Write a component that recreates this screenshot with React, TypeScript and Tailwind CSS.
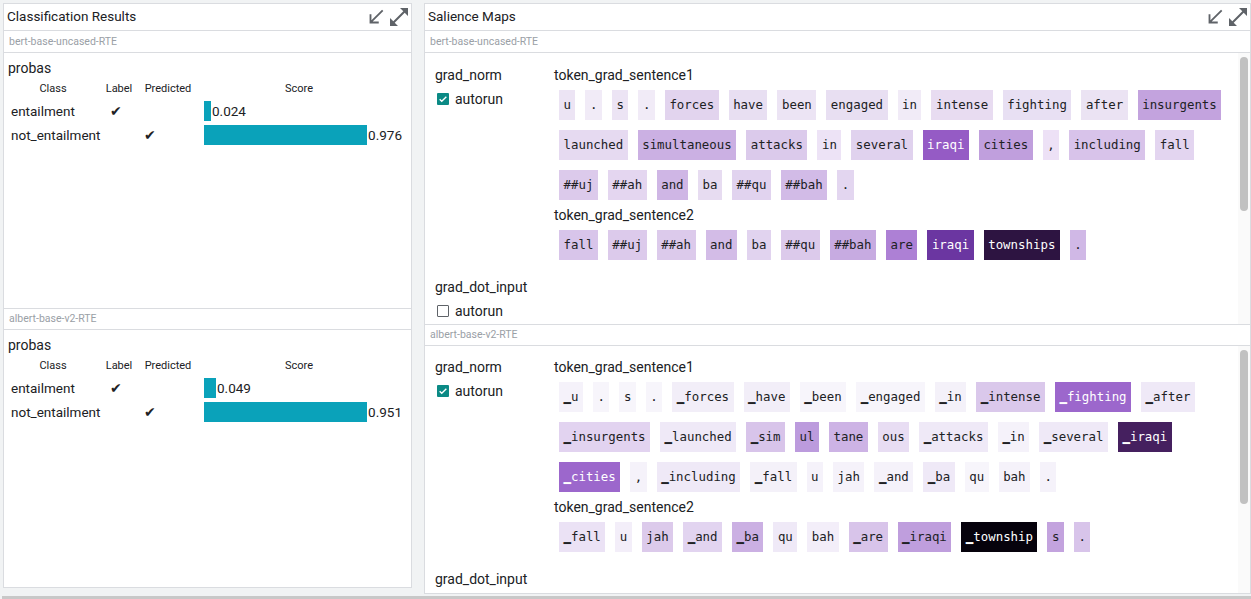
import React from 'react';

type Tok = [string, string, boolean?];

const BERT_S1: Tok[] = [
  ['u', '#ece4f4'], ['.', '#f1ebf7'], ['s', '#ece4f4'], ['.', '#f1ebf7'], ['forces', '#e2d4ee'],
  ['have', '#e8dff2'], ['been', '#ece4f4'], ['engaged', '#e8dff2'], ['in', '#f1ebf7'], ['intense', '#e8dcf1'],
  ['fighting', '#e8e0f3'], ['after', '#ebe3f3'], ['insurgents', '#c3a3de'],
  ['launched', '#e6daf1'], ['simultaneous', '#cbb0e3'], ['attacks', '#dbcaeb'], ['in', '#ede3f6'],
  ['several', '#e0d2ee'], ['iraqi', '#955bc5', true], ['cities', '#c09fdd'], [',', '#ede1f6'],
  ['including', '#d8c3ea'], ['fall', '#e3d5f0'],
  ['##uj', '#dccaeb'], ['##ah', '#e4d6f0'], ['and', '#cfb6e5'], ['ba', '#e7dcf1'], ['##qu', '#e1d3ef'],
  ['##bah', '#d2bbe7'], ['.', '#e3d6f0'],
];

const BERT_S2: Tok[] = [
  ['fall', '#d8c5ea'], ['##uj', '#dccaeb'], ['##ah', '#dccaeb'], ['and', '#d3bce7'], ['ba', '#e1d3ef'],
  ['##qu', '#dccaeb'], ['##bah', '#c7abe1'], ['are', '#ad80d5'], ['iraqi', '#6b36a1', true],
  ['townships', '#2d1441', true], ['.', '#d0b8e6'],
];

const ALBERT_S1: Tok[] = [
  ['▁u', '#f5f2fa'], ['.', '#f7f5fb'], ['s', '#f7f5fb'], ['.', '#f7f5fb'], ['▁forces', '#f2eef8'],
  ['▁have', '#f2eef8'], ['▁been', '#f7f5fb'], ['▁engaged', '#f7f5fb'], ['▁in', '#f4f1f9'],
  ['▁intense', '#dac8eb'], ['▁fighting', '#9c67cc', true], ['▁after', '#efe9f7'],
  ['▁insurgents', '#e2d3f0'], ['▁launched', '#efe9f7'], ['▁sim', '#d8c4ea'], ['ul', '#bc9bdd'],
  ['tane', '#cdb3e5'], ['ous', '#e8ddf3'], ['▁attacks', '#efe9f7'], ['▁in', '#f5f2fa'],
  ['▁several', '#efe9f7'], ['▁iraqi', '#45205f', true],
  ['▁cities', '#9c67cc', true], [',', '#f5f2fa'], ['▁including', '#efe9f7'], ['▁fall', '#f4f1f9'],
  ['u', '#f5f2fa'], ['jah', '#f5f2fa'], ['▁and', '#f5f2fa'], ['▁ba', '#efe9f7'], ['qu', '#f7f5fb'],
  ['bah', '#f5f2fa'], ['.', '#f5f2fa'],
];

const ALBERT_S2: Tok[] = [
  ['▁fall', '#ebe2f5'], ['u', '#f3eef9'], ['jah', '#dccaeb'], ['▁and', '#e2d4f0'], ['▁ba', '#cbb0e3'],
  ['qu', '#efe9f7'], ['bah', '#f3eef9'], ['▁are', '#d8c4ea'], ['▁iraqi', '#bf9edd'],
  ['▁township', '#06020c', true], ['s', '#c3a3de'], ['.', '#d8c4ea'],
];

const CLASSIFICATION = [
  {
    model: 'bert-base-uncased-RTE',
    rows: [
      { cls: 'entailment', label: true, pred: false, score: '0.024', bar: 7 },
      { cls: 'not_entailment', label: false, pred: true, score: '0.976', bar: 165 },
    ],
  },
  {
    model: 'albert-base-v2-RTE',
    rows: [
      { cls: 'entailment', label: true, pred: false, score: '0.049', bar: 12 },
      { cls: 'not_entailment', label: false, pred: true, score: '0.951', bar: 167 },
    ],
  },
];

const SouthWestIcon = () => (
  <svg width="22" height="22" viewBox="0 0 24 24" fill="#5f6368">
    <path d="M20 5.41L18.59 4 7 15.59V9H5v10h10v-2H8.41z" />
  </svg>
);

const ExpandIcon = () => (
  <svg width="24" height="24" viewBox="0 0 24 24" fill="#5f6368">
    <path d="M21 11V3h-8l3.29 3.29-10 10L3 13v8h8l-3.29-3.29 10-10z" />
  </svg>
);

const PanelHeader = ({ title }: { title: string }) => (
  <div className="h-[27px] flex items-center justify-between pl-[3px] border-b border-[#dadce0] shrink-0">
    <span className="text-[13.5px] text-[#202124] -mt-[1px]">{title}</span>
    <div className="flex items-center">
      <SouthWestIcon />
      <ExpandIcon />
    </div>
  </div>
);

const ModelBar = ({ name, top }: { name: string; top?: boolean }) => (
  <div
    className={`h-[22px] flex items-center px-[5px] text-[10.5px] text-[#9aa0a6] border-b border-[#dadce0] shrink-0 ${
      top ? 'border-t' : ''
    }`}
  >
    {name}
  </div>
);

const Checkbox = ({ checked }: { checked: boolean }) =>
  checked ? (
    <div className="w-[12px] h-[12px] bg-[#0b8a85] rounded-[1px] flex items-center justify-center">
      <svg width="10" height="10" viewBox="0 0 24 24" fill="none" stroke="white" strokeWidth="3.2">
        <path d="M4 12.5l5 5L20 6.5" />
      </svg>
    </div>
  ) : (
    <div className="w-[12px] h-[12px] border border-[#5f6368] rounded-[1px] bg-white" />
  );

const Autorun = ({ checked }: { checked: boolean }) => (
  <div className="mt-[4px] h-[20px] flex items-center gap-[6px] pl-[2px]">
    <Checkbox checked={checked} />
    <span className="text-[14px] text-[#202124]">autorun</span>
  </div>
);

const Token = ({ t }: { t: Tok }) => (
  <span
    className={`m-[5px] h-[30px] px-[4.5px] leading-[30px] text-[12.4px] font-['DejaVu_Sans_Mono',monospace] whitespace-pre ${
      t[2] ? 'text-white' : 'text-[#202124]'
    }`}
    style={{ backgroundColor: t[1] }}
  >
    {t[0]}
  </span>
);

const TokenGroup = ({ label, tokens }: { label: string; tokens: Tok[] }) => (
  <div>
    <div className="h-[20px] leading-[20px] text-[14px] text-[#202124]">{label}</div>
    <div className="flex flex-wrap">
      {tokens.map((t, i) => (
        <Token key={i} t={t} />
      ))}
    </div>
  </div>
);

const Scrollbar = ({ top, height }: { top: number; height: number }) => (
  <div className="w-[12px] shrink-0 bg-[#fafafa] flex justify-center">
    <div className="w-[8px] rounded-full bg-[#c1c1c1]" style={{ marginTop: top, height }} />
  </div>
);

const SalienceSection = ({
  s1,
  s2,
  pt,
  thumbTop,
  showSecondAutorun,
}: {
  s1: Tok[];
  s2: Tok[];
  pt: string;
  thumbTop: number;
  showSecondAutorun: boolean;
}) => (
  <div className="flex-1 flex min-h-0">
    <div className={`flex-1 overflow-hidden pl-[10px] ${pt}`}>
      <div className="flex">
        <div className="w-[119px] shrink-0">
          <div className="h-[20px] leading-[20px] text-[14px] text-[#202124]">grad_norm</div>
          <Autorun checked />
        </div>
        <div className="w-[684px]">
          <TokenGroup label="token_grad_sentence1" tokens={s1} />
          <TokenGroup label="token_grad_sentence2" tokens={s2} />
        </div>
      </div>
      <div className="mt-[12px]">
        <div className="h-[20px] leading-[20px] text-[14px] text-[#202124]">grad_dot_input</div>
        {showSecondAutorun && <Autorun checked={false} />}
      </div>
    </div>
    <Scrollbar top={thumbTop} height={154} />
  </div>
);

const ClassificationTable = ({ rows }: { rows: (typeof CLASSIFICATION)[0]['rows'] }) => (
  <div className="pt-[5px] pl-[4px]">
    <div className="h-[20px] leading-[20px] text-[14px] text-[#202124]">probas</div>
    <div className="mt-[1px] grid grid-cols-[90px_42px_56px_206px] text-[#202124]">
      <div className="h-[20px] leading-[20px] text-[11px] text-center">Class</div>
      <div className="h-[20px] leading-[20px] text-[11px] text-center">Label</div>
      <div className="h-[20px] leading-[20px] text-[11px] text-center">Predicted</div>
      <div className="h-[20px] leading-[20px] text-[11px] text-center">Score</div>
      {rows.map((r) => (
        <React.Fragment key={r.cls}>
          <div className="h-[24px] flex items-center pl-[3px] text-[13.5px]">{r.cls}</div>
          <div className="h-[24px] flex items-center pl-[12px] text-[14px] font-['DejaVu_Sans',sans-serif]">
            {r.label ? '✔' : ''}
          </div>
          <div className="h-[24px] flex items-center pl-[4px] text-[14px] font-['DejaVu_Sans',sans-serif]">
            {r.pred ? '✔' : ''}
          </div>
          <div className="h-[24px] flex items-center pl-[8px]">
            <div className="h-[20px] bg-[#0aa2ba]" style={{ width: r.bar }} />
            <span className="text-[13.5px] pl-[1px]">{r.score}</span>
          </div>
        </React.Fragment>
      ))}
    </div>
  </div>
);

export default function App() {
  return (
    <div className="w-[1251px] h-[599px] bg-[#f1f3f4] flex flex-col overflow-hidden font-['Roboto',sans-serif]">
      <div className="flex-1 flex items-start pt-[3px] pl-[3px] gap-[12px] min-h-0">
        {/* Classification Results */}
        <div className="w-[409px] h-[585px] bg-white border border-[#dadce0] flex flex-col">
          <PanelHeader title="Classification Results" />
          <ModelBar name={CLASSIFICATION[0].model} />
          <div className="h-[255px] shrink-0">
            <ClassificationTable rows={CLASSIFICATION[0].rows} />
          </div>
          <ModelBar name={CLASSIFICATION[1].model} top />
          <div className="flex-1">
            <ClassificationTable rows={CLASSIFICATION[1].rows} />
          </div>
        </div>

        {/* Salience Maps */}
        <div className="w-[827px] h-[591px] bg-white border border-[#dadce0] flex flex-col">
          <PanelHeader title="Salience Maps" />
          <ModelBar name="bert-base-uncased-RTE" />
          <div className="h-[271px] shrink-0 flex">
            <SalienceSection s1={BERT_S1} s2={BERT_S2} pt="pt-[12px]" thumbTop={4} showSecondAutorun />
          </div>
          <ModelBar name="albert-base-v2-RTE" top />
          <div className="flex-1 flex min-h-0">
            <SalienceSection
              s1={ALBERT_S1}
              s2={ALBERT_S2}
              pt="pt-[11px]"
              thumbTop={4}
              showSecondAutorun={false}
            />
          </div>
        </div>
      </div>
      <div className="h-[3px] bg-[#c8c8c8] ml-[2px] shrink-0" />
    </div>
  );
}
